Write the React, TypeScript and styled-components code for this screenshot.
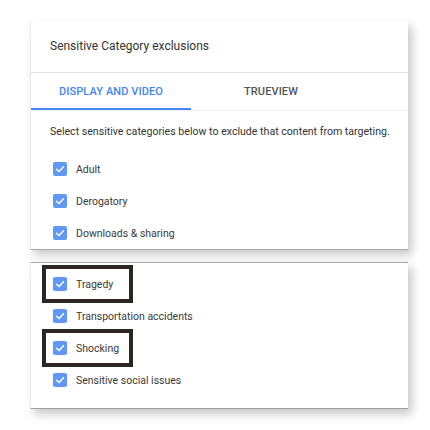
import React from "react";
import styled, { createGlobalStyle } from "styled-components";

const GlobalStyle = createGlobalStyle`
    html, body {
        margin: 0;
        padding: 0;
        background: #ffffff;
    }
    body {
        font-family: Roboto, "Liberation Sans", Arial, sans-serif;
        color: #333333;
    }
`;

const Page = styled.div`
    width: 430px;
    height: 430px;
    padding: 21px 0 0 30px;
    box-sizing: border-box;
    display: flex;
    flex-direction: column;
    gap: 12px;
`;

const Card = styled.div<{ $cut?: "top" | "bottom" }>`
    width: 378px;
    background: #ffffff;
    box-shadow: 4px 5px 9px rgba(0, 0, 0, 0.22);
    border-left: 1px solid #ececec;
    box-sizing: border-box;
    ${(p) => (p.$cut === "bottom" ? "border-bottom: 1px solid #a8a8a8;" : "")}
    ${(p) =>
        p.$cut === "top"
            ? "border-top: 1px solid #a8a8a8; border-bottom: 1px solid #a0a0a0; padding: 2px 0 15px;"
            : ""}
`;

const Header = styled.div`
    height: 52px;
    display: flex;
    align-items: center;
    padding: 0 0 2px 19px;
    box-sizing: border-box;
    font-size: 12px;
    color: #333333;
    border-bottom: 1px solid #e2e2e2;
`;

const Tabs = styled.div`
    display: flex;
    border-bottom: 1px solid #efefef;
`;

const Tab = styled.div<{ $active?: boolean }>`
    width: 160px;
    height: 37px;
    display: flex;
    align-items: center;
    justify-content: center;
    box-sizing: border-box;
    padding-top: 1px;
    font-size: 11px;
    font-weight: 500;
    letter-spacing: 0.1px;
    color: ${(p) => (p.$active ? "#4285f4" : "#555555")};
    border-bottom: 2px solid ${(p) => (p.$active ? "#4285f4" : "transparent")};
`;

const Intro = styled.div`
    height: 42px;
    display: flex;
    align-items: center;
    padding: 0 0 2px 19px;
    box-sizing: border-box;
    font-size: 10.6px;
    color: #333333;
`;

const Row = styled.div<{ $h?: number }>`
    height: ${(p) => p.$h ?? 32}px;
    display: flex;
    align-items: center;
    gap: 9px;
    padding-left: 22px;
    box-sizing: border-box;
    font-size: 10.5px;
    color: #3a3a3a;
`;

const Highlight = styled.div`
    width: 91px;
    height: 38px;
    margin-left: 11px;
    border: 4px solid #2b2622;
    box-sizing: border-box;
    display: flex;
    align-items: center;
    gap: 9px;
    padding-left: 7px;
    font-size: 10.5px;
    color: #3a3a3a;
`;

const Box = styled.span`
    width: 14px;
    height: 14px;
    border-radius: 2px;
    background: #5f98f5;
    display: inline-flex;
    align-items: center;
    justify-content: center;
    flex-shrink: 0;
`;

function Check() {
    return (
        <Box>
            <svg width="10" height="10" viewBox="0 0 10 10">
                <path
                    d="M1.6 5.2 L4 7.4 L8.5 2.8"
                    fill="none"
                    stroke="#ffffff"
                    strokeWidth="1.4"
                    strokeLinecap="round"
                    strokeLinejoin="round"
                />
            </svg>
        </Box>
    );
}

const firstItems = ["Adult", "Derogatory", "Downloads & sharing"];

export default function App() {
    return (
        <>
            <GlobalStyle />
            <Page>
                <Card $cut="bottom">
                    <Header>Sensitive Category exclusions</Header>
                    <Tabs>
                        <Tab $active>DISPLAY AND VIDEO</Tab>
                        <Tab>TRUEVIEW</Tab>
                    </Tabs>
                    <Intro>
                        Select sensitive categories below to exclude that content from targeting.
                    </Intro>
                    {firstItems.map((item) => (
                        <Row key={item}>
                            <Check />
                            {item}
                        </Row>
                    ))}
                </Card>
                <Card $cut="top">
                    <Highlight>
                        <Check />
                        Tragedy
                    </Highlight>
                    <Row $h={26}>
                        <Check />
                        Transportation accidents
                    </Row>
                    <Highlight>
                        <Check />
                        Shocking
                    </Highlight>
                    <Row $h={26}>
                        <Check />
                        Sensitive social issues
                    </Row>
                </Card>
            </Page>
        </>
    );
}
